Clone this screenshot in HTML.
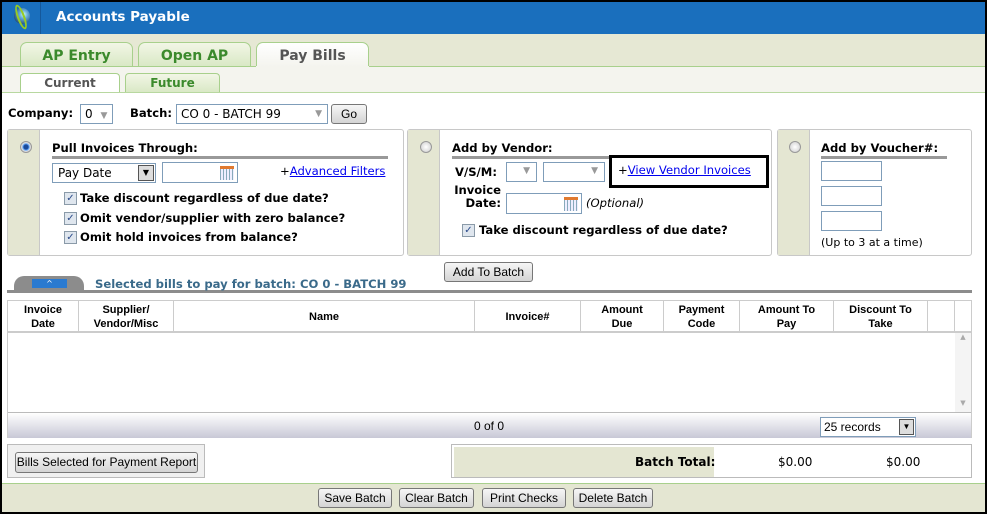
<!DOCTYPE html>
<html><head><meta charset="utf-8"><style>
*{box-sizing:border-box;margin:0;padding:0}
body{width:987px;height:514px;background:#000;position:relative;overflow:hidden;font-family:"DejaVu Sans",Verdana,sans-serif;font-size:12px;color:#000;white-space:nowrap}
.a{position:absolute}
#pg{left:2px;top:2px;width:983px;height:510px;background:#fff}
.hdr{left:0;top:0;width:983px;height:32px;background:#1a6fbd}
.tab{height:25px;border:1px solid #a8d08c;border-bottom:none;border-radius:7px 7px 0 0;background:linear-gradient(#f2f6e6,#d8e8c4);color:#3b8a2c;font-weight:bold;font-size:14px;text-align:center;line-height:26px}
.stab{height:20px;border:1px solid #a8d08c;border-bottom:none;border-radius:4px 4px 0 0;background:linear-gradient(#f2f6e6,#d8e8c4);color:#3b8a2c;font-weight:bold;font-size:12px;text-align:center;line-height:19px}
.panel{border:1px solid #c8c8c8;border-radius:3px;background:#fff}
.strip{left:0;top:0;width:32px;height:100%;background:#e4e6d2;border-right:1px solid #c8c8c8}
.radio{width:12px;height:12px;border-radius:50%;border:1px solid #999;background:radial-gradient(#fff,#ccc)}
.h{font-weight:bold;font-size:11.6px;border-bottom:3px solid #999;padding-bottom:1px}
.cb{width:13px;height:13px;border:1px solid #8a9aa8;background:#dfe6ee;font-size:10px;line-height:11px;text-align:center;color:#2a4a8a}
.lbl{font-weight:bold;font-size:11.6px}
.inp{border:1px solid #7f9db9;background:#fff;height:20px}
.btn{border:1px solid #777;border-radius:3px;background:linear-gradient(#f6f6f6,#d4d4d4);font-family:"Liberation Sans",Arial,sans-serif;font-size:12px;text-align:center;line-height:18px;height:20px}
.th{top:0;height:32px;border-right:1px solid #ccc;font-family:"Liberation Sans",Arial,sans-serif;font-size:11px;font-weight:bold;text-align:center;display:flex;align-items:center;justify-content:center;line-height:14px}
a{color:#00e;text-decoration:underline}
.cal{width:14px;height:14px;background:repeating-linear-gradient(90deg,#8ab 0 1px,#eef 1px 3px);border-top:3px solid #e07a30}
</style></head><body>
<div class="a" id="pg">
<div class="a hdr"></div>
<div class="a" style="left:38px;top:0;width:1px;height:32px;background:#15589a"></div>
<div class="a" style="left:12px;top:6px;width:16px;height:16px;border-radius:50%;background:radial-gradient(circle at 60% 40%,#cfe 0,#6ad 30%,#135 90%)"></div>
<div class="a" style="left:15px;top:2px;width:8px;height:26px;border:2px solid #9c2;border-radius:50%;transform:rotate(-20deg)"></div>
<div class="a" style="left:54px;top:7px;color:#fff;font-weight:bold;font-size:13.5px">Accounts Payable</div>
<div class="a" style="left:0;top:32px;width:983px;height:32px;background:#e6e8d4"></div>
<div class="a tab" style="left:18px;top:40px;width:113px">AP Entry</div>
<div class="a tab" style="left:136px;top:40px;width:113px">Open AP</div>
<div class="a tab" style="left:254px;top:40px;width:113px;background:linear-gradient(#fff,#f4f4ee);color:#555">Pay Bills</div>
<div class="a" style="left:0;top:64px;width:983px;height:26px;background:#f4f4ee"></div>
<div class="a" style="left:0;top:64px;width:254px;height:1px;background:#a8d08c"></div>
<div class="a" style="left:367px;top:64px;width:616px;height:1px;background:#a8d08c"></div>
<div class="a stab" style="left:18px;top:71px;width:100px;background:#fff;color:#555">Current</div>
<div class="a stab" style="left:123px;top:71px;width:95px">Future</div>
<div class="a" style="left:0;top:90px;width:983px;height:1px;background:#b8d8a0"></div>
<div class="a lbl" style="left:6px;top:104px">Company:</div>
<div class="a inp" style="left:78px;top:102px;width:33px;padding-left:4px;line-height:18px">0 <span style="color:#999;font-size:9px;margin-left:4px">▼</span></div>
<div class="a lbl" style="left:128px;top:104px">Batch:</div>
<div class="a inp" style="left:174px;top:102px;width:152px;padding-left:4px;line-height:18px;font-size:12px">CO 0 - BATCH 99<span class="a" style="right:5px;color:#999;font-size:9px">▼</span></div>
<div class="a btn" style="left:329px;top:102px;width:36px">Go</div>

<div class="a panel" style="left:5px;top:127px;width:397px;height:127px"><div class="a strip"></div>
<div class="a radio" style="left:12px;top:11px;background:radial-gradient(#1a4a9a 30%,#6af 45%,#ddd 60%)"></div>
<div class="a h" style="left:44px;top:11px;width:336px">Pull Invoices Through:</div>
<div class="a inp" style="left:44px;top:33px;width:104px;padding-left:5px;line-height:18px">Pay Date<div class="a" style="right:1px;top:1px;width:16px;height:16px;border:1px solid #555;background:#ddd;font-size:8px;text-align:center;line-height:14px">▼</div></div>
<div class="a inp" style="left:154px;top:32px;width:76px;height:21px"><div class="a cal" style="right:3px;top:3px"></div></div>
<div class="a" style="left:272px;top:34px;font-size:11.6px">+<a>Advanced Filters</a></div>
<div class="a cb" style="left:56px;top:62px">✓</div><div class="a lbl" style="left:72px;top:61px">Take discount regardless of due date?</div>
<div class="a cb" style="left:56px;top:82px">✓</div><div class="a lbl" style="left:72px;top:81px">Omit vendor/supplier with zero balance?</div>
<div class="a cb" style="left:56px;top:101px">✓</div><div class="a lbl" style="left:72px;top:100px">Omit hold invoices from balance?</div>
</div>

<div class="a panel" style="left:405px;top:127px;width:365px;height:127px"><div class="a strip"></div>
<div class="a radio" style="left:12px;top:11px"></div>
<div class="a h" style="left:44px;top:11px;width:273px">Add by Vendor:</div>
<div class="a lbl" style="left:47px;top:35px">V/S/M:</div>
<div class="a inp" style="left:98px;top:32px;width:31px"><span class="a" style="right:6px;top:3px;color:#999;font-size:9px">▼</span></div>
<div class="a inp" style="left:135px;top:32px;width:62px"><span class="a" style="right:6px;top:3px;color:#999;font-size:9px">▼</span></div>
<div class="a" style="left:201px;top:25px;width:160px;height:33px;border:3px solid #000;background:#fff"></div>
<div class="a" style="left:210px;top:33px;font-size:11.6px">+<a>View Vendor Invoices</a></div>
<div class="a lbl" style="left:45px;top:54px;line-height:13px;text-align:right;width:48px">Invoice<br>Date:</div>
<div class="a inp" style="left:98px;top:63px;width:76px;height:21px"><div class="a cal" style="right:3px;top:3px"></div></div>
<div class="a" style="left:178px;top:66px;font-style:italic;font-size:11.6px">(Optional)</div>
<div class="a cb" style="left:54px;top:94px">✓</div><div class="a lbl" style="left:71px;top:93px">Take discount regardless of due date?</div>
</div>

<div class="a panel" style="left:775px;top:127px;width:195px;height:127px"><div class="a strip"></div>
<div class="a radio" style="left:11px;top:11px"></div>
<div class="a h" style="left:43px;top:11px;width:126px">Add by Voucher#:</div>
<div class="a inp" style="left:43px;top:31px;width:61px"></div>
<div class="a inp" style="left:43px;top:56px;width:61px"></div>
<div class="a inp" style="left:43px;top:81px;width:61px"></div>
<div class="a" style="left:43px;top:106px;font-size:11px">(Up to 3 at a time)</div>
</div>

<div class="a btn" style="left:442px;top:260px;width:89px">Add To Batch</div>
<div class="a" style="left:5px;top:288px;width:965px;height:3px;background:#8c8c8c"></div>
<div class="a" style="left:12px;top:274px;width:70px;height:14px;background:#8c8c8c;border-radius:10px 10px 0 0"></div>
<div class="a" style="left:30px;top:277px;width:35px;height:9px;background:#2a7ad0;color:#fff;font-size:8px;text-align:center;line-height:9px">^</div>
<div class="a" style="left:93px;top:275px;color:#3a6a8a;font-weight:bold;font-size:11.6px">Selected bills to pay for batch: CO 0 - BATCH 99</div>

<div class="a" style="left:5px;top:298px;width:965px;height:138px;border:1px solid #ccc;background:#fff">
<div class="a" style="left:0;top:0;width:963px;height:32px;border-bottom:2px solid #ccc">
<div class="a th" style="left:0;width:71px">Invoice<br>Date</div>
<div class="a th" style="left:71px;width:95px">Supplier/<br>Vendor/Misc</div>
<div class="a th" style="left:166px;width:301px">Name</div>
<div class="a th" style="left:467px;width:106px">Invoice#</div>
<div class="a th" style="left:573px;width:83px">Amount<br>Due</div>
<div class="a th" style="left:656px;width:76px">Payment<br>Code</div>
<div class="a th" style="left:732px;width:94px">Amount To<br>Pay</div>
<div class="a th" style="left:826px;width:94px">Discount To<br>Take</div>
<div class="a th" style="left:920px;width:27px"></div>
</div>
<div class="a" style="left:947px;top:32px;width:16px;height:79px;background:#f4f4f4;color:#aaa;font-size:7px;text-align:center">▲<div style="margin-top:58px">▼</div></div>
<div class="a" style="left:0;top:111px;width:963px;height:26px;background:linear-gradient(#fff,#c8c8d6);border-top:1px solid #bbb;font-family:'Liberation Sans',Arial,sans-serif;font-size:12px">
<div class="a" style="left:466px;top:6px">0 of 0</div>
<div class="a inp" style="left:812px;top:4px;width:96px;padding-left:3px;line-height:18px">25 records<div class="a" style="right:1px;top:1px;width:15px;height:16px;border:1px solid #555;background:#ddd;font-size:8px;text-align:center;line-height:14px">▼</div></div>
</div></div>

<div class="a" style="left:5px;top:442px;width:198px;height:34px;border:1px solid #bbb;background:#f0f0f0"></div>
<div class="a btn" style="left:13px;top:450px;width:183px;height:21px">Bills Selected for Payment Report</div>
<div class="a" style="left:449px;top:442px;width:521px;height:34px;border:1px solid #bbb;background:#fff"></div>
<div class="a" style="left:452px;top:445px;width:260px;height:30px;background:#e4e6d2"></div>
<div class="a" style="left:633px;top:453px;font-weight:bold;font-size:12px">Batch Total:</div>
<div class="a" style="left:776px;top:453px;font-size:12px">$0.00</div>
<div class="a" style="left:884px;top:453px;font-size:12px">$0.00</div>

<div class="a" style="left:0;top:481px;width:983px;height:29px;background:#e4e6d2;border-top:1px solid #a8d08c"></div>
<div class="a btn" style="left:316px;top:486px;width:74px">Save Batch</div>
<div class="a btn" style="left:397px;top:486px;width:75px">Clear Batch</div>
<div class="a btn" style="left:480px;top:486px;width:84px">Print Checks</div>
<div class="a btn" style="left:571px;top:486px;width:80px">Delete Batch</div>
</div>
</body></html>
